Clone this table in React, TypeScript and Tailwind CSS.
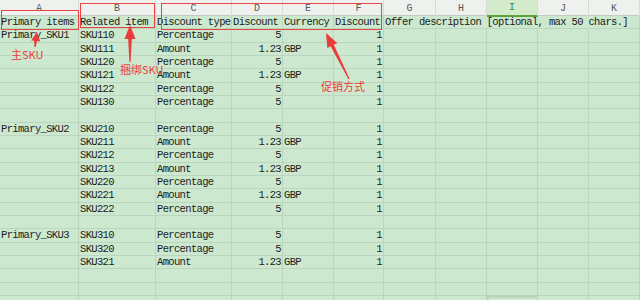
import React from 'react';

const cols = ['A', 'B', 'C', 'D', 'E', 'F', 'G', 'H', 'I', 'J', 'K'];

type Row = [string, string, string, string, string, string];

const blank: Row = ['', '', '', '', '', ''];

// 表格数据
const rows: Row[] = [
  ['Primary_SKU1', 'SKU110', 'Percentage', '5', '', '1'],
  ['', 'SKU111', 'Amount', '1.23', 'GBP', '1'],
  ['', 'SKU120', 'Percentage', '5', '', '1'],
  ['', 'SKU121', 'Amount', '1.23', 'GBP', '1'],
  ['', 'SKU122', 'Percentage', '5', '', '1'],
  ['', 'SKU130', 'Percentage', '5', '', '1'],
  blank,
  ['Primary_SKU2', 'SKU210', 'Percentage', '5', '', '1'],
  ['', 'SKU211', 'Amount', '1.23', 'GBP', '1'],
  ['', 'SKU212', 'Percentage', '5', '', '1'],
  ['', 'SKU213', 'Amount', '1.23', 'GBP', '1'],
  ['', 'SKU220', 'Percentage', '5', '', '1'],
  ['', 'SKU221', 'Amount', '1.23', 'GBP', '1'],
  ['', 'SKU222', 'Percentage', '5', '', '1'],
  blank,
  ['Primary_SKU3', 'SKU310', 'Percentage', '5', '', '1'],
  ['', 'SKU320', 'Percentage', '5', '', '1'],
  ['', 'SKU321', 'Amount', '1.23', 'GBP', '1'],
  blank,
  blank,
];

const gridCols = 'grid grid-cols-[79px_77px_76px_51px_51px_50px_52px_51px_51px_51px_51px]';
const cell = 'h-[13.333px] border-r border-b border-[#bcd5be] px-px leading-[13px] whitespace-nowrap overflow-visible';

function Arrow({ tip, tail, head = 12, headW = 11, neck = 3.4, end = 1.2 }: {
  tip: [number, number]; tail: [number, number]; head?: number; headW?: number; neck?: number; end?: number;
}) {
  const dx = tail[0] - tip[0];
  const dy = tail[1] - tip[1];
  const len = Math.hypot(dx, dy);
  const ux = dx / len, uy = dy / len;
  const px = -uy, py = ux;
  const bx = tip[0] + ux * head, by = tip[1] + uy * head;
  const pts = [
    [tip[0], tip[1]],
    [bx + px * headW / 2, by + py * headW / 2],
    [bx + px * neck / 2, by + py * neck / 2],
    [tail[0] + px * end / 2, tail[1] + py * end / 2],
    [tail[0] - px * end / 2, tail[1] - py * end / 2],
    [bx - px * neck / 2, by - py * neck / 2],
    [bx - px * headW / 2, by - py * headW / 2],
  ].map(p => p.join(',')).join(' ');
  return <polygon points={pts} fill="#ec3b3b" />;
}

export default function App() {
  return (
    <div className="relative w-[640px] h-[300px] overflow-hidden bg-[#cce8cf] text-[10.5px] tracking-[-0.65px] text-[#1c1c1c] font-['Liberation_Mono',monospace]">
      {/* 列头 */}
      <div className={`${gridCols} h-[16px] bg-[#eef1ee] border-b border-[#c3cbc3]`}>
        {cols.map(c => (
          <div
            key={c}
            className={`flex items-center justify-center border-r border-[#d6dbd6] text-[10px] tracking-normal ${c === 'I' ? 'bg-[#d3eacb] text-[#3d8a2a] border-b-2 border-b-[#5ba33a]' : 'text-[#5a5a5a]'}`}
          >
            {c}
          </div>
        ))}
      </div>

      {/* 标题行 */}
      <div className={gridCols}>
        <div className={cell}>Primary items</div>
        <div className={cell}>Related item</div>
        <div className={cell}>Discount type</div>
        <div className={cell}>Discount</div>
        <div className={cell}>Currency</div>
        <div className={cell}>Discount</div>
        <div className={`${cell} col-span-5`}>Offer description [optional, max 50 chars.]</div>
      </div>

      {rows.map((r, i) => (
        <div key={i} className={gridCols}>
          <div className={cell}>{r[0]}</div>
          <div className={cell}>{r[1]}</div>
          <div className={cell}>{r[2]}</div>
          <div className={`${cell} text-right`}>{r[3]}</div>
          <div className={cell}>{r[4]}</div>
          <div className={`${cell} text-right`}>{r[5]}</div>
          {cols.slice(6).map(c => <div key={c} className={cell} />)}
        </div>
      ))}

      <div className={gridCols}>
        {cols.map(c => (
          <div key={c} className={`${cell} ${c === 'I' ? 'border-2 border-[#5ba33a]' : ''}`} />
        ))}
      </div>

      {/* 标注 */}
      <div className="absolute left-[1px] top-[10px] w-[78px] h-[20px] border border-[#ea4545]" />
      <div className="absolute left-[80px] top-[3px] w-[75px] h-[25px] border border-[#ea4545]" />
      <div className="absolute left-[161px] top-[3px] w-[221px] h-[27px] border border-[#ea4545]" />

      <svg className="absolute inset-0" width="640" height="300" viewBox="0 0 640 300">
        <Arrow tip={[36.7, 32]} tail={[35, 47]} head={9} headW={9} neck={3} end={1.2} />
        <Arrow tip={[130, 25]} tail={[130, 62]} head={14} headW={11} neck={3.6} end={1.2} />
        <Arrow tip={[326, 33]} tail={[349, 79]} head={14} headW={11} neck={3.6} end={1.2} />
      </svg>

      <span className="absolute left-[11px] top-[49px] text-[11px] tracking-normal leading-none text-[#ec3b3b] font-['Noto_Sans_CJK_SC',sans-serif]">主SKU</span>
      <span className="absolute left-[120px] top-[64px] text-[11px] tracking-normal leading-none text-[#ec3b3b] font-['Noto_Sans_CJK_SC',sans-serif]">捆绑SKU</span>
      <span className="absolute left-[321px] top-[81px] text-[11px] tracking-normal leading-none text-[#ec3b3b] font-['Noto_Sans_CJK_SC',sans-serif]">促销方式</span>
    </div>
  );
}
